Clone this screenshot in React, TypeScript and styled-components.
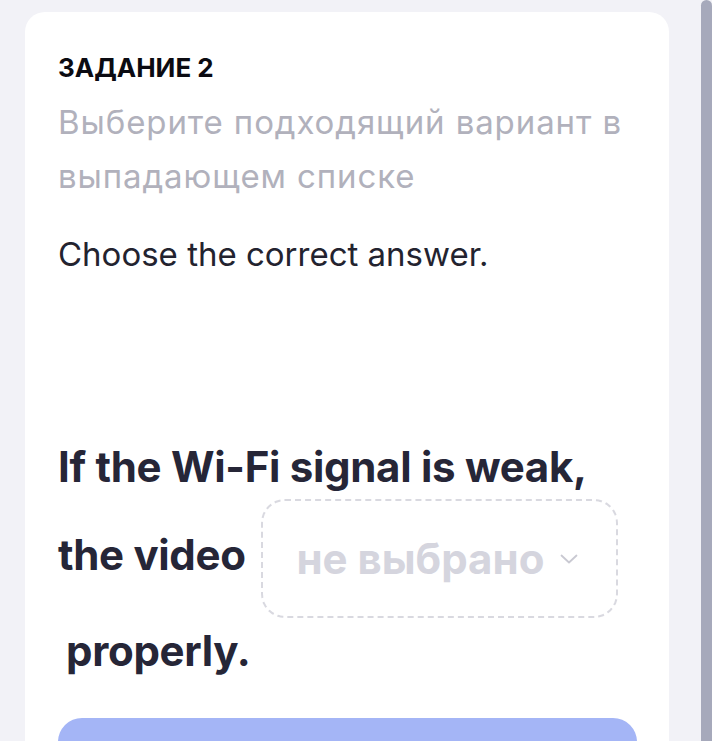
import styled, { createGlobalStyle } from 'styled-components';

const GlobalStyle = createGlobalStyle`
  html, body {
    margin: 0;
    padding: 0;
    background: #f2f2f7;
    overflow: hidden;
  }
`;

const Page = styled.div`
  display: flex;
  height: 100vh;
  overflow: hidden;
`;

const Main = styled.main`
  flex: 1;
  padding: 12px 32px 0 25px;
`;

const ScrollThumb = styled.div`
  width: 11px;
  flex: 0 0 11px;
  background: #a6a9bb;
  border-radius: 6px 6px 0 0;
`;

const Card = styled.section`
  background: #ffffff;
  border-radius: 20px 20px 0 0;
  padding: 40px 32px 40px 33px;
  min-height: 800px;
  font-family: Inter, 'Noto Sans', sans-serif;
`;

const Title = styled.h2`
  margin: 0;
  font-weight: 700;
  font-size: 26px;
  line-height: 32px;
  color: #0b0b12;
`;

const Hint = styled.p`
  margin: 11px 0 0;
  font-size: 33px;
  line-height: 54px;
  letter-spacing: 0.9px;
  color: #b1b1bc;
`;

const Instruction = styled.p`
  margin: 31px 0 0;
  font-size: 33px;
  line-height: 40px;
  color: #23232f;
`;

const Sentence = styled.div`
  margin-top: 160px;
  font-weight: 700;
  font-size: 42px;
  line-height: 65px;
  letter-spacing: -0.3px;
  color: #262637;
`;

const Select = styled.button`
  display: inline-flex;
  align-items: center;
  gap: 16px;
  vertical-align: middle;
  box-sizing: border-box;
  height: 119px;
  margin-left: 6px;
  padding: 0 38px 0 33px;
  border: 2px dashed #d9d9e0;
  border-radius: 24px;
  background: #ffffff;
  font: inherit;
  color: #d5d5de;
  cursor: pointer;
`;

const Tail = styled.span`
  margin-left: 8px;
`;

const SubmitButton = styled.button`
  display: block;
  width: 100%;
  height: 64px;
  margin-top: 35px;
  border: none;
  border-radius: 24px;
  background: #a4b5f6;
`;

const Chevron = () => (
  <svg width="18" height="10" viewBox="0 0 18 10" fill="none">
    <path d="M1.5 1.5L9 8.5L16.5 1.5" stroke="#c9c9d2" strokeWidth="1.8" strokeLinecap="round" strokeLinejoin="round" />
  </svg>
);

export default function App() {
  return (
    <>
      <GlobalStyle />
      <Page>
        <Main>
          <Card>
            <Title>ЗАДАНИЕ 2</Title>
            <Hint>Выберите подходящий вариант в выпадающем списке</Hint>
            <Instruction>Choose the correct answer.</Instruction>
            <Sentence>
              If the Wi-Fi signal is weak, the video{' '}
              <Select type="button">
                не выбрано
                <Chevron />
              </Select>{' '}
              <Tail>properly.</Tail>
            </Sentence>
            <SubmitButton type="button" />
          </Card>
        </Main>
        <ScrollThumb />
      </Page>
    </>
  );
}
